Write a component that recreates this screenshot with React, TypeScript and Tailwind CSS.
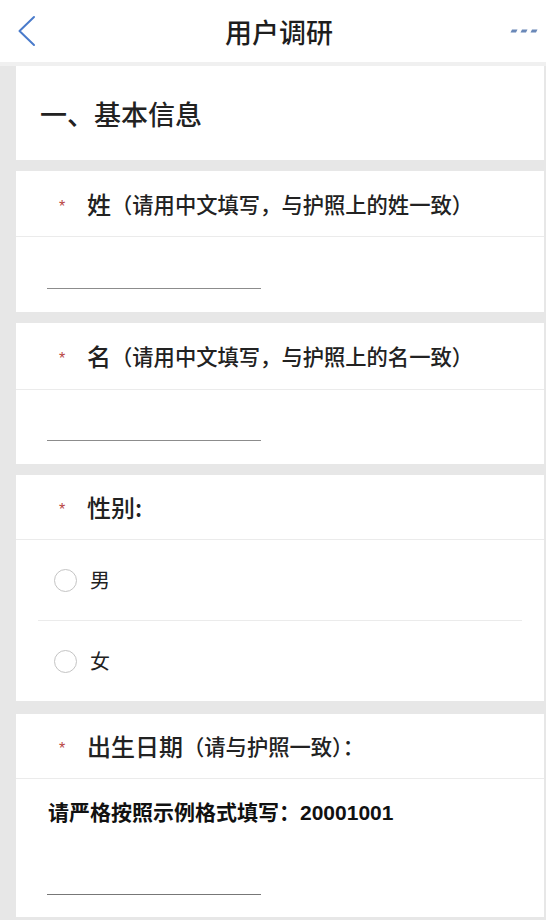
import React from "react";

const FONT = { fontFamily: '"Noto Sans CJK SC", "Noto Sans", sans-serif' };

function Asterisk() {
  return (
    <span className="w-[28px] shrink-0 text-[16px] leading-none text-[#b8453f] mt-[6px]" style={{ fontFamily: '"Liberation Sans", sans-serif' }}>
      *
    </span>
  );
}

function QuestionHeader({ main, sub, h }: { main: string; sub?: string; h: string }) {
  return (
    <div className={`${h} flex items-center pl-[43px] border-b border-[#ebebeb]`}>
      <Asterisk />
      <span className="text-[24px] font-medium text-[#222] leading-none">{main}</span>
      {sub && <span className="text-[21.3px] font-medium text-[#222] leading-none">{sub}</span>}
    </div>
  );
}

function Underline({ pt, h }: { pt: string; h: string }) {
  return (
    <div className={`${h} ${pt}`}>
      <div className="ml-[31px] w-[214px] h-px bg-[#8c8c8c]" />
    </div>
  );
}

function Radio({ label }: { label: string }) {
  return (
    <div className="h-[80px] flex items-center pl-[38px]">
      <div className="w-[23px] h-[23px] rounded-full border-[1.5px] border-[#c4c4c4] bg-white" />
      <span className="ml-[13px] text-[20px] text-[#222] leading-none">{label}</span>
    </div>
  );
}

export default function App() {
  return (
    <div className="w-full min-h-[920px] bg-[#e7e7e7]" style={FONT}>
      <header className="h-[66px] bg-white border-b-4 border-[#f0f0f0] flex items-center">
        <div className="w-[60px] pl-[17px] flex items-center">
          <svg width="20" height="32" viewBox="0 0 20 32" fill="none">
            <polyline points="17,2 2.5,16 17,30" stroke="#4a7bcb" strokeWidth="2" strokeLinecap="round" strokeLinejoin="round" />
          </svg>
        </div>
        <div className="flex-1 text-center pl-[12px] text-[27px] font-medium text-[#1e1e1e] leading-none">
          用户调研
        </div>
        <div className="w-[60px] flex items-center justify-end pr-[6px]">
          <svg width="30" height="6" viewBox="0 0 30 6">
            <polygon points="2,1.5 7.5,1.5 6,4.5 0.5,4.5" fill="#6a88b8" />
            <polygon points="12,1.5 17.5,1.5 16,4.5 10.5,4.5" fill="#6a88b8" />
            <polygon points="22,1.5 27.5,1.5 26,4.5 20.5,4.5" fill="#6a88b8" />
          </svg>
        </div>
      </header>

      <div className="pl-4 pr-[2px]">
        <div className="h-[94px] bg-white flex items-center pl-6">
          <span className="text-[27px] font-medium text-[#222] leading-none">一、基本信息</span>
        </div>

        <div className="mt-[11px] bg-white">
          <QuestionHeader h="h-[66px]" main="姓" sub="（请用中文填写，与护照上的姓一致）" />
          <Underline h="h-[75px]" pt="pt-[51px]" />
        </div>

        <div className="mt-[11px] bg-white">
          <QuestionHeader h="h-[67px]" main="名" sub="（请用中文填写，与护照上的名一致）" />
          <Underline h="h-[74px]" pt="pt-[50px]" />
        </div>

        <div className="mt-[11px] bg-white">
          <QuestionHeader h="h-[65px]" main="性别:" />
          <Radio label="男" />
          <div className="mx-[22px] h-px bg-[#ebebeb]" />
          <Radio label="女" />
        </div>

        <div className="mt-[13px] bg-white">
          <QuestionHeader h="h-[65px]" main="出生日期" sub="（请与护照一致）：" />
          <div className="h-[138px] pt-[23px]">
            <div className="ml-[32px] text-[21px] font-bold text-[#111] leading-none" style={{ fontFamily: '"Liberation Sans", "Noto Sans CJK SC", sans-serif' }}>
              请严格按照示例格式填写：20001001
            </div>
            <div className="mt-[71px] ml-[31px] w-[214px] h-px bg-[#777]" />
          </div>
        </div>
      </div>
    </div>
  );
}
